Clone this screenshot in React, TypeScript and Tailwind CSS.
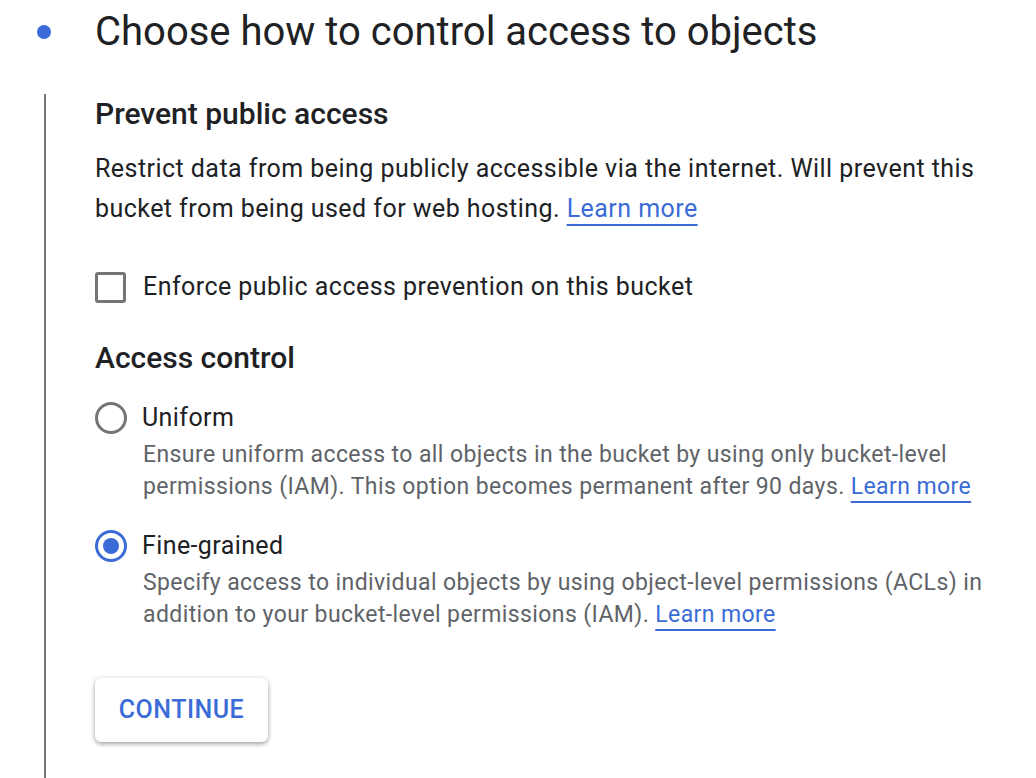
import React from 'react';

const LearnMore = () => (
  <a href="#" className="text-[#3b6bd6] underline decoration-2 underline-offset-[7px]">
    Learn more
  </a>
);

const Radio = ({ checked }: { checked?: boolean }) =>
  checked ? (
    <span className="w-[32px] h-[32px] rounded-full border-[3px] border-[#3b6bd6] flex items-center justify-center shrink-0">
      <span className="w-[16px] h-[16px] rounded-full bg-[#3b6bd6]" />
    </span>
  ) : (
    <span className="w-[32px] h-[32px] rounded-full border-[3px] border-[#757575] shrink-0" />
  );

const Option = ({
  label,
  checked,
  children,
}: {
  label: string;
  checked?: boolean;
  children: React.ReactNode;
}) => (
  <div className="flex flex-col">
    <div className="flex items-center gap-[15px] h-[36px]">
      <Radio checked={checked} />
      <span className="text-[25px] leading-[32px] tracking-[0.4px] text-[#202124]">{label}</span>
    </div>
    <p className="mt-[3px] pl-[48px] text-[23px] leading-[32px] tracking-[0.4px] text-[#5f6368]">{children}</p>
  </div>
);

export default function App() {
  return (
    <div className="w-[1036px] h-[778px] bg-white overflow-hidden font-['Roboto',sans-serif] text-[#202124]">
      {/* step header */}
      <div className="flex items-center pt-[8px] pl-[37px] h-[56px]">
        <span className="w-[14px] h-[14px] rounded-full bg-[#3b6bd6]" />
        <h1 className="ml-[44px] text-[40px] leading-[48px] text-[#202124]">
          Choose how to control access to objects
        </h1>
      </div>

      {/* step body */}
      <div className="ml-[44px] mt-[38px] border-l-2 border-[#757575] pl-[49px] h-[700px]">
        <h2 className="pt-[2px] text-[30px] leading-[36px] font-medium">Prevent public access</h2>
        <p className="mt-[17px] max-w-[900px] text-[25px] leading-[40px] tracking-[0.45px]">
          Restrict data from being publicly accessible via the internet. Will prevent this bucket from being used for web
          hosting. <LearnMore />
        </p>

        <label className="mt-[42px] flex items-center gap-[17px] h-[32px]">
          <span className="w-[31px] h-[31px] rounded-[3px] border-[3px] border-[#757575] shrink-0" />
          <span className="text-[25px] leading-[32px] tracking-[0.45px]">
            Enforce public access prevention on this bucket
          </span>
        </label>

        <h2 className="mt-[37px] text-[30px] leading-[36px] font-medium">Access control</h2>

        <div className="mt-[24px] flex flex-col gap-[25px]">
          <Option label="Uniform">
            Ensure uniform access to all objects in the bucket by using only bucket-level permissions (IAM). This option
            becomes permanent after 90 days. <LearnMore />
          </Option>
          <Option label="Fine-grained" checked>
            Specify access to individual objects by using object-level permissions (ACLs) in addition to your
            bucket-level permissions (IAM). <LearnMore />
          </Option>
        </div>

        <button className="mt-[47px] w-[173px] h-[64px] rounded-[6px] bg-white shadow-[0_2px_4px_rgba(0,0,0,0.3),0_1px_6px_rgba(0,0,0,0.12)] text-[25px] font-medium tracking-[0.5px] text-[#3b6bd6] uppercase">
          Continue
        </button>
      </div>
    </div>
  );
}
